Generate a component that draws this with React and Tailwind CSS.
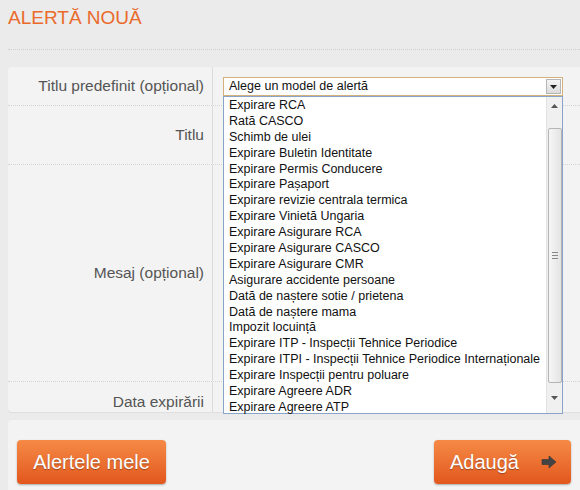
const options = [
  "Expirare RCA",
  "Rată CASCO",
  "Schimb de ulei",
  "Expirare Buletin Identitate",
  "Expirare Permis Conducere",
  "Expirare Pașaport",
  "Expirare revizie centrala termica",
  "Expirare Vinietă Ungaria",
  "Expirare Asigurare RCA",
  "Expirare Asigurare CASCO",
  "Expirare Asigurare CMR",
  "Asigurare accidente persoane",
  "Dată de naștere sotie / prietena",
  "Dată de naștere mama",
  "Impozit locuință",
  "Expirare ITP - Inspecții Tehnice Periodice",
  "Expirare ITPI - Inspecții Tehnice Periodice Internaționale",
  "Expirare Inspecții pentru poluare",
  "Expirare Agreere ADR",
  "Expirare Agreere ATP",
];

const label =
  "text-right pr-2 text-[15.5px] text-[#555555] font-['Liberation_Sans',sans-serif]";

const ArrowIcon = () => (
  <svg width="16" height="14" viewBox="0 0 16 14">
    <path d="M1 4.5h7V1l7 6-7 6V9.5H1z" fill="#444" stroke="#333" strokeWidth="0.6" />
  </svg>
);

const App = () => {
  return (
    <div className="relative w-[580px] h-[490px] overflow-hidden bg-[#ebebeb] font-['Liberation_Sans',sans-serif]">
      {/* Heading */}
      <div className="pl-2 pt-[6px] h-[49px]">
        <h1 className="text-[19px] leading-[24px] text-[#ea6a2c]">ALERTĂ NOUĂ</h1>
      </div>
      <div className="ml-2 border-t border-dotted border-[#cfcfcf]"></div>

      {/* Form */}
      <div className="mt-[17px] ml-2 bg-[#f3f3f3] rounded-l-[4px] shadow-[0_1px_1px_rgba(0,0,0,0.06)] grid grid-cols-[205px_1fr]">
        <div className={`${label} h-[38px] flex items-center justify-end border-r border-[#dcdcdc]`}>
          Titlu predefinit (opțional)
        </div>
        <div className="h-[38px] pl-[10px] pt-[10px]">
          <div className="w-[340px] h-[19px] bg-white border border-[#d2b27a] flex items-center justify-between pl-[5px]">
            <span className="text-[12.5px] leading-none text-[#111]">Alege un model de alertă</span>
            <div className="w-[15px] h-[15px] mr-[1px] bg-gradient-to-b from-[#f4f4f4] to-[#dcdcdc] border border-[#b5b5b5] flex items-center justify-center">
              <svg width="7" height="4" viewBox="0 0 7 4">
                <path d="M0 0h7L3.5 4z" fill="#222" />
              </svg>
            </div>
          </div>
        </div>
        <div className="col-span-2 border-t border-dotted border-[#d4d4d4]"></div>

        <div className={`${label} h-[58px] flex items-center justify-end border-r border-[#dcdcdc]`}>Titlu</div>
        <div className="h-[58px]"></div>
        <div className="col-span-2 border-t border-dotted border-[#d4d4d4]"></div>

        <div className={`${label} h-[216px] flex items-center justify-end border-r border-[#dcdcdc]`}>
          Mesaj (opțional)
        </div>
        <div className="h-[216px]"></div>
        <div className="col-span-2 border-t border-dotted border-[#d4d4d4]"></div>

        <div className={`${label} h-[30px] pt-[10px] flex items-center justify-end border-r border-[#dcdcdc]`}>
          Data expirării
        </div>
        <div className="h-[30px]"></div>
      </div>

      {/* Buttons */}
      <div className="mt-[8px] ml-2 h-[80px] bg-[#f3f3f3] rounded-l-[4px] flex justify-between items-start pt-[20px] pl-[9px] pr-[9px]">
        <button className="w-[149px] h-[44px] rounded-[4px] bg-gradient-to-b from-[#f58a45] to-[#e2561b] shadow-[0_1px_2px_rgba(0,0,0,0.3)] text-white text-[20px] [text-shadow:0_1px_1px_rgba(0,0,0,0.35)]">
          Alertele mele
        </button>
        <button className="w-[137px] h-[44px] rounded-[4px] bg-gradient-to-b from-[#f58a45] to-[#e2561b] shadow-[0_1px_2px_rgba(0,0,0,0.3)] text-white text-[20px] [text-shadow:0_1px_1px_rgba(0,0,0,0.35)] flex items-center justify-end pr-[14px] gap-[22px]">
          <span>Adaugă</span>
          <ArrowIcon />
        </button>
      </div>

      {/* Open dropdown list overlay */}
      <div className="absolute left-[223px] top-[96px] w-[340px] h-[318px] bg-white border border-[#8aa4c8] flex">
        <ul className="flex-1 pt-[1px] pl-[5px]">
          {options.map((o) => (
            <li key={o} className="h-[15.9px] leading-[15.9px] text-[12.5px] text-[#111] whitespace-nowrap">
              {o}
            </li>
          ))}
        </ul>
        <div className="w-[16px] bg-[#f0f0f0] border-l border-[#e2e2e2] flex flex-col items-center">
          <div className="h-[17px] flex items-center justify-center">
            <svg width="7" height="4" viewBox="0 0 7 4">
              <path d="M0 4h7L3.5 0z" fill="#555" />
            </svg>
          </div>
          <div className="mt-[14px] w-[14px] h-[255px] rounded-[2px] border border-[#b4b4b4] bg-gradient-to-r from-[#f6f6f6] to-[#e4e4e4] flex items-center justify-center">
            <div className="flex flex-col gap-[2px]">
              <div className="w-[6px] h-px bg-[#888]"></div>
              <div className="w-[6px] h-px bg-[#888]"></div>
              <div className="w-[6px] h-px bg-[#888]"></div>
            </div>
          </div>
          <div className="flex-1 flex items-center justify-center">
            <svg width="7" height="4" viewBox="0 0 7 4">
              <path d="M0 0h7L3.5 4z" fill="#555" />
            </svg>
          </div>
        </div>
      </div>
    </div>
  );
};

export default App;
